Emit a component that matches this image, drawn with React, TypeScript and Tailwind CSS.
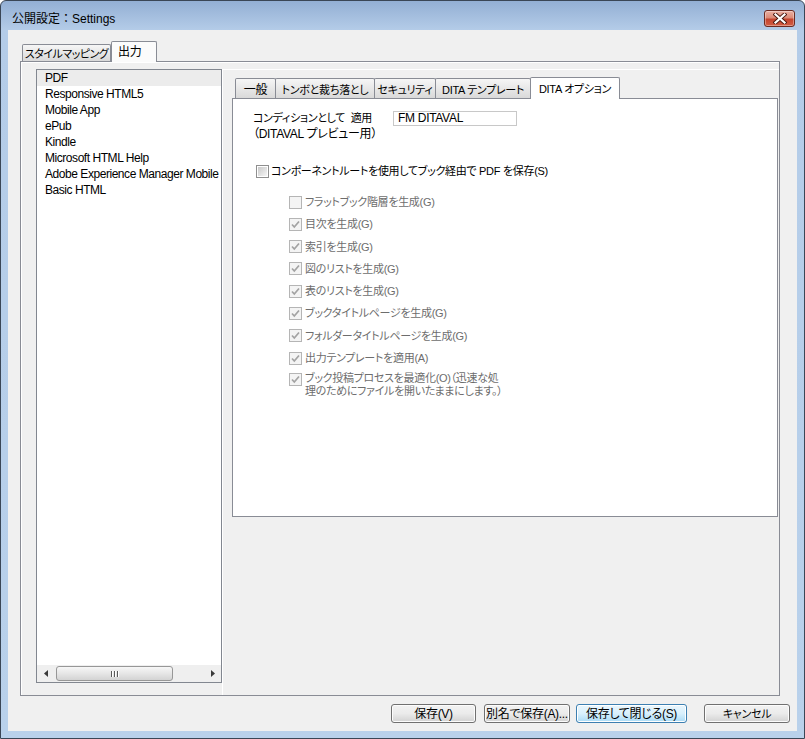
import React from "react";

function CloseBtn() {
  return (
    <div className="ml-auto mt-[9px] w-[31px] h-[17px] rounded-[3px] border border-[#6b2b22] bg-[linear-gradient(to_bottom,#eab0a3_0%,#dc8a77_45%,#c4442e_55%,#d35e44_100%)] flex items-center justify-center shadow-[inset_0_0_0_1px_rgba(255,255,255,0.35)]">
      <svg width="14" height="11" viewBox="0 0 14 11">
        <path d="M2.5 1.5 L11.5 9.5 M11.5 1.5 L2.5 9.5" stroke="#4a1a12" strokeWidth="4" strokeLinecap="square" />
        <path d="M2.5 1.5 L11.5 9.5 M11.5 1.5 L2.5 9.5" stroke="#ffffff" strokeWidth="2.2" strokeLinecap="square" />
      </svg>
    </div>
  );
}

function DisabledCheck({ checked }: { checked: boolean }) {
  return (
    <span className="w-[13px] h-[13px] shrink-0 border border-[#b5b5b5] bg-[#f4f4f4] flex items-center justify-center">
      {checked && (
        <svg width="11" height="11" viewBox="0 0 11 11">
          <path d="M2 5.5 L4.3 8 L9 2.5" fill="none" stroke="#a3a3a3" strokeWidth="1.7" />
        </svg>
      )}
    </span>
  );
}

const items = [
  "PDF",
  "Responsive HTML5",
  "Mobile App",
  "ePub",
  "Kindle",
  "Microsoft HTML Help",
  "Adobe Experience Manager Mobile",
  "Basic HTML",
];

const subs: { t: string; c: boolean }[] = [
  { t: "フラットブック階層を生成(G)", c: false },
  { t: "目次を生成(G)", c: true },
  { t: "索引を生成(G)", c: true },
  { t: "図のリストを生成(G)", c: true },
  { t: "表のリストを生成(G)", c: true },
  { t: "ブックタイトルページを生成(G)", c: true },
  { t: "フォルダータイトルページを生成(G)", c: true },
  { t: "出力テンプレートを適用(A)", c: true },
];

export default function App() {
  return (
    <div className="w-[805px] h-[739px] flex flex-col overflow-hidden rounded-t-[6px] border border-[#3a4656] bg-[linear-gradient(to_bottom,#93afd4_0px,#b4cce8_29px,#b9d1eb_100%)] text-[12px] text-black font-['Liberation_Sans','Noto_Sans_CJK_JP',sans-serif] [font-feature-settings:'palt'] tracking-[-0.3px] leading-[16px]">
      {/* title bar */}
      <div className="h-[29px] shrink-0 flex items-start pl-[11px] pr-[9px]">
        <span className="mt-[10px] leading-[16px] tracking-normal [font-feature-settings:normal]">公開設定：Settings</span>
        <CloseBtn />
      </div>

      {/* body */}
      <div className="flex-1 flex px-[7px] pb-[7px]">
        <div className="flex-1 bg-[#f0f0f0] flex flex-col pt-[11px] pl-[12px]">
          {/* outer tab strip */}
          <div className="h-[20px] flex items-end pl-[2px]">
            <div className="w-[89px] h-[17px] border border-b-0 border-[#898c95] rounded-t-[2px] bg-gradient-to-b from-[#f6f6f6] to-[#d9d9d9] flex items-center justify-center pt-[1px] whitespace-nowrap text-[11px] tracking-[-0.5px]">
              スタイルマッピング
            </div>
            <div className="relative z-10 w-[46px] h-[21px] -mb-px border border-b-0 border-[#898c95] rounded-t-[2px] bg-[#fbfbfb] flex items-center pl-[6px]">
              出力
            </div>
          </div>

          {/* outer panel */}
          <div className="w-[760px] h-[635px] border border-[#898c95] bg-[#f0f0f0] flex pt-[7px] pl-[15px] shadow-[inset_1px_1px_0_#ffffff]">
            {/* list box */}
            <div className="w-[186px] h-[614px] shrink-0 border border-[#828790] bg-white flex flex-col overflow-hidden">
              <div className="flex-1 flex flex-col tracking-[-0.45px]">
                {items.map((it, i) => (
                  <div
                    key={it}
                    className={`h-[16px] pl-[8px] whitespace-nowrap flex items-center ${i === 0 ? "bg-[#ececec]" : ""}`}
                  >
                    {it}
                  </div>
                ))}
              </div>
              {/* horizontal scrollbar */}
              <div className="h-[17px] shrink-0 bg-[#efefef] flex items-center">
                <div className="w-[17px] h-full flex items-center justify-center">
                  <svg width="4" height="7" viewBox="0 0 4 7">
                    <path d="M4 0 L0 3.5 L4 7 Z" fill="#3a3a3a" />
                  </svg>
                </div>
                <div className="ml-[2px] w-[117px] h-[15px] rounded-[3px] border border-[#979797] bg-gradient-to-b from-[#f7f7f7] via-[#e6e6e6] to-[#d3d3d3] flex items-center justify-center">
                  <svg width="8" height="6" viewBox="0 0 8 6">
                    <rect x="0" y="0" width="1" height="6" fill="#5a5a5a" />
                    <rect x="1" y="0" width="1" height="6" fill="#ffffff" />
                    <rect x="3" y="0" width="1" height="6" fill="#5a5a5a" />
                    <rect x="4" y="0" width="1" height="6" fill="#ffffff" />
                    <rect x="6" y="0" width="1" height="6" fill="#5a5a5a" />
                    <rect x="7" y="0" width="1" height="6" fill="#ffffff" />
                  </svg>
                </div>
                <div className="flex-1" />
                <div className="w-[17px] h-full flex items-center justify-center">
                  <svg width="4" height="7" viewBox="0 0 4 7">
                    <path d="M0 0 L4 3.5 L0 7 Z" fill="#3a3a3a" />
                  </svg>
                </div>
              </div>
            </div>

            {/* right area */}
            <div className="flex-1 self-stretch border-l border-t border-white pl-[9px] pt-[7px] flex flex-col">
              {/* inner tab strip */}
              <div className="h-[21px] flex items-end ml-[3px] text-[11px]">
                <div className="w-[41px] h-[20px] border border-b-0 border-[#898c95] rounded-t-[2px] bg-gradient-to-b from-[#f6f6f6] to-[#d9d9d9] flex items-center justify-center pt-[2px] text-[12px]">
                  一般
                </div>
                <div className="-ml-px w-[100px] h-[20px] border border-b-0 border-[#898c95] rounded-t-[2px] bg-gradient-to-b from-[#f6f6f6] to-[#d9d9d9] flex items-center justify-center pt-[2px] whitespace-nowrap">
                  トンボと裁ち落とし
                </div>
                <div className="-ml-px w-[62px] h-[20px] border border-b-0 border-[#898c95] rounded-t-[2px] bg-gradient-to-b from-[#f6f6f6] to-[#d9d9d9] flex items-center justify-center pt-[2px] whitespace-nowrap">
                  セキュリティ
                </div>
                <div className="-ml-px w-[96px] h-[20px] border border-b-0 border-[#898c95] rounded-t-[2px] bg-gradient-to-b from-[#f6f6f6] to-[#d9d9d9] flex items-center justify-center pt-[2px] whitespace-nowrap">
                  DITA テンプレート
                </div>
                <div className="relative z-10 -ml-px w-[90px] h-[22px] -mb-px border border-b-0 border-[#898c95] rounded-t-[2px] bg-white flex items-center justify-center whitespace-nowrap">
                  DITA オプション
                </div>
              </div>

              {/* inner panel */}
              <div className="w-[546px] h-[419px] border border-[#898c95] bg-white pl-[20px] pt-[11px] flex flex-col">
                <div className="flex">
                  <div className="w-[140px] flex flex-col whitespace-nowrap">
                    <span className="h-[16px] text-[11px] flex items-center">コンディションとして{"\u00a0\u00a0"}適用</span>
                    <span className="h-[16px] flex items-center">（DITAVAL プレビュー用）</span>
                  </div>
                  <div className="mt-[1px] w-[124px] h-[15px] border border-[#c8c8c8] bg-white pl-[4px] flex items-center leading-[13px] whitespace-nowrap">
                    FM DITAVAL
                  </div>
                </div>

                <div className="mt-[21px] h-[16px] ml-[3px] flex items-center whitespace-nowrap text-[11px]">
                  <span className="w-[13px] h-[13px] shrink-0 border border-[#8f8f8f] bg-white flex items-center justify-center">
                    <span className="w-[9px] h-[9px] bg-gradient-to-br from-[#c9c9c9] to-[#f6f6f6]" />
                  </span>
                  <span className="ml-[2px]">コンポーネントルートを使用してブック経由で PDF を保存(S)</span>
                </div>

                <div className="mt-[15px] ml-[36px] flex flex-col gap-[6.3px] text-[#6d6d6d] text-[11px]">
                  {subs.map((s, i) => (
                    <div key={i} className="h-[16px] flex items-center whitespace-nowrap">
                      <DisabledCheck checked={s.c} />
                      <span className="ml-[3px]">{s.t}</span>
                    </div>
                  ))}
                  <div className="flex items-start whitespace-nowrap pt-[1px]">
                    <DisabledCheck checked={true} />
                    <span className="ml-[3px] leading-[12.5px] -mt-[1px]">
                      ブック投稿プロセスを最適化(O)（迅速な処
                      <br />
                      理のためにファイルを開いたままにします。）
                    </span>
                  </div>
                </div>
              </div>
            </div>
          </div>

          {/* buttons */}
          <div className="mt-[8px] h-[19px] flex justify-end pr-[7px]">
            <div className="w-[85px] h-[19px] rounded-[3px] border border-[#707070] bg-gradient-to-b from-[#f2f2f2] via-[#ebebeb] to-[#d2d2d2] shadow-[inset_0_0_0_1px_#fcfcfc] flex items-center justify-center">
              保存(V)
            </div>
            <div className="ml-[8px] w-[86px] h-[19px] rounded-[3px] border border-[#707070] bg-gradient-to-b from-[#f2f2f2] via-[#ebebeb] to-[#d2d2d2] shadow-[inset_0_0_0_1px_#fcfcfc] flex items-center justify-center whitespace-nowrap">
              別名で保存(A)...
            </div>
            <div className="ml-[6px] w-[111px] h-[19px] rounded-[3px] border border-[#3c7fb1] bg-gradient-to-b from-[#eaf6fd] via-[#d9f0fc] to-[#a9dbf6] shadow-[inset_0_0_0_1px_#ffffff] flex items-center justify-center whitespace-nowrap">
              保存して閉じる(S)
            </div>
            <div className="ml-[17px] w-[86px] h-[19px] rounded-[3px] border border-[#707070] bg-gradient-to-b from-[#f2f2f2] via-[#ebebeb] to-[#d2d2d2] shadow-[inset_0_0_0_1px_#fcfcfc] flex items-center justify-center text-[11px]">
              キャンセル
            </div>
          </div>
        </div>
      </div>
    </div>
  );
}
